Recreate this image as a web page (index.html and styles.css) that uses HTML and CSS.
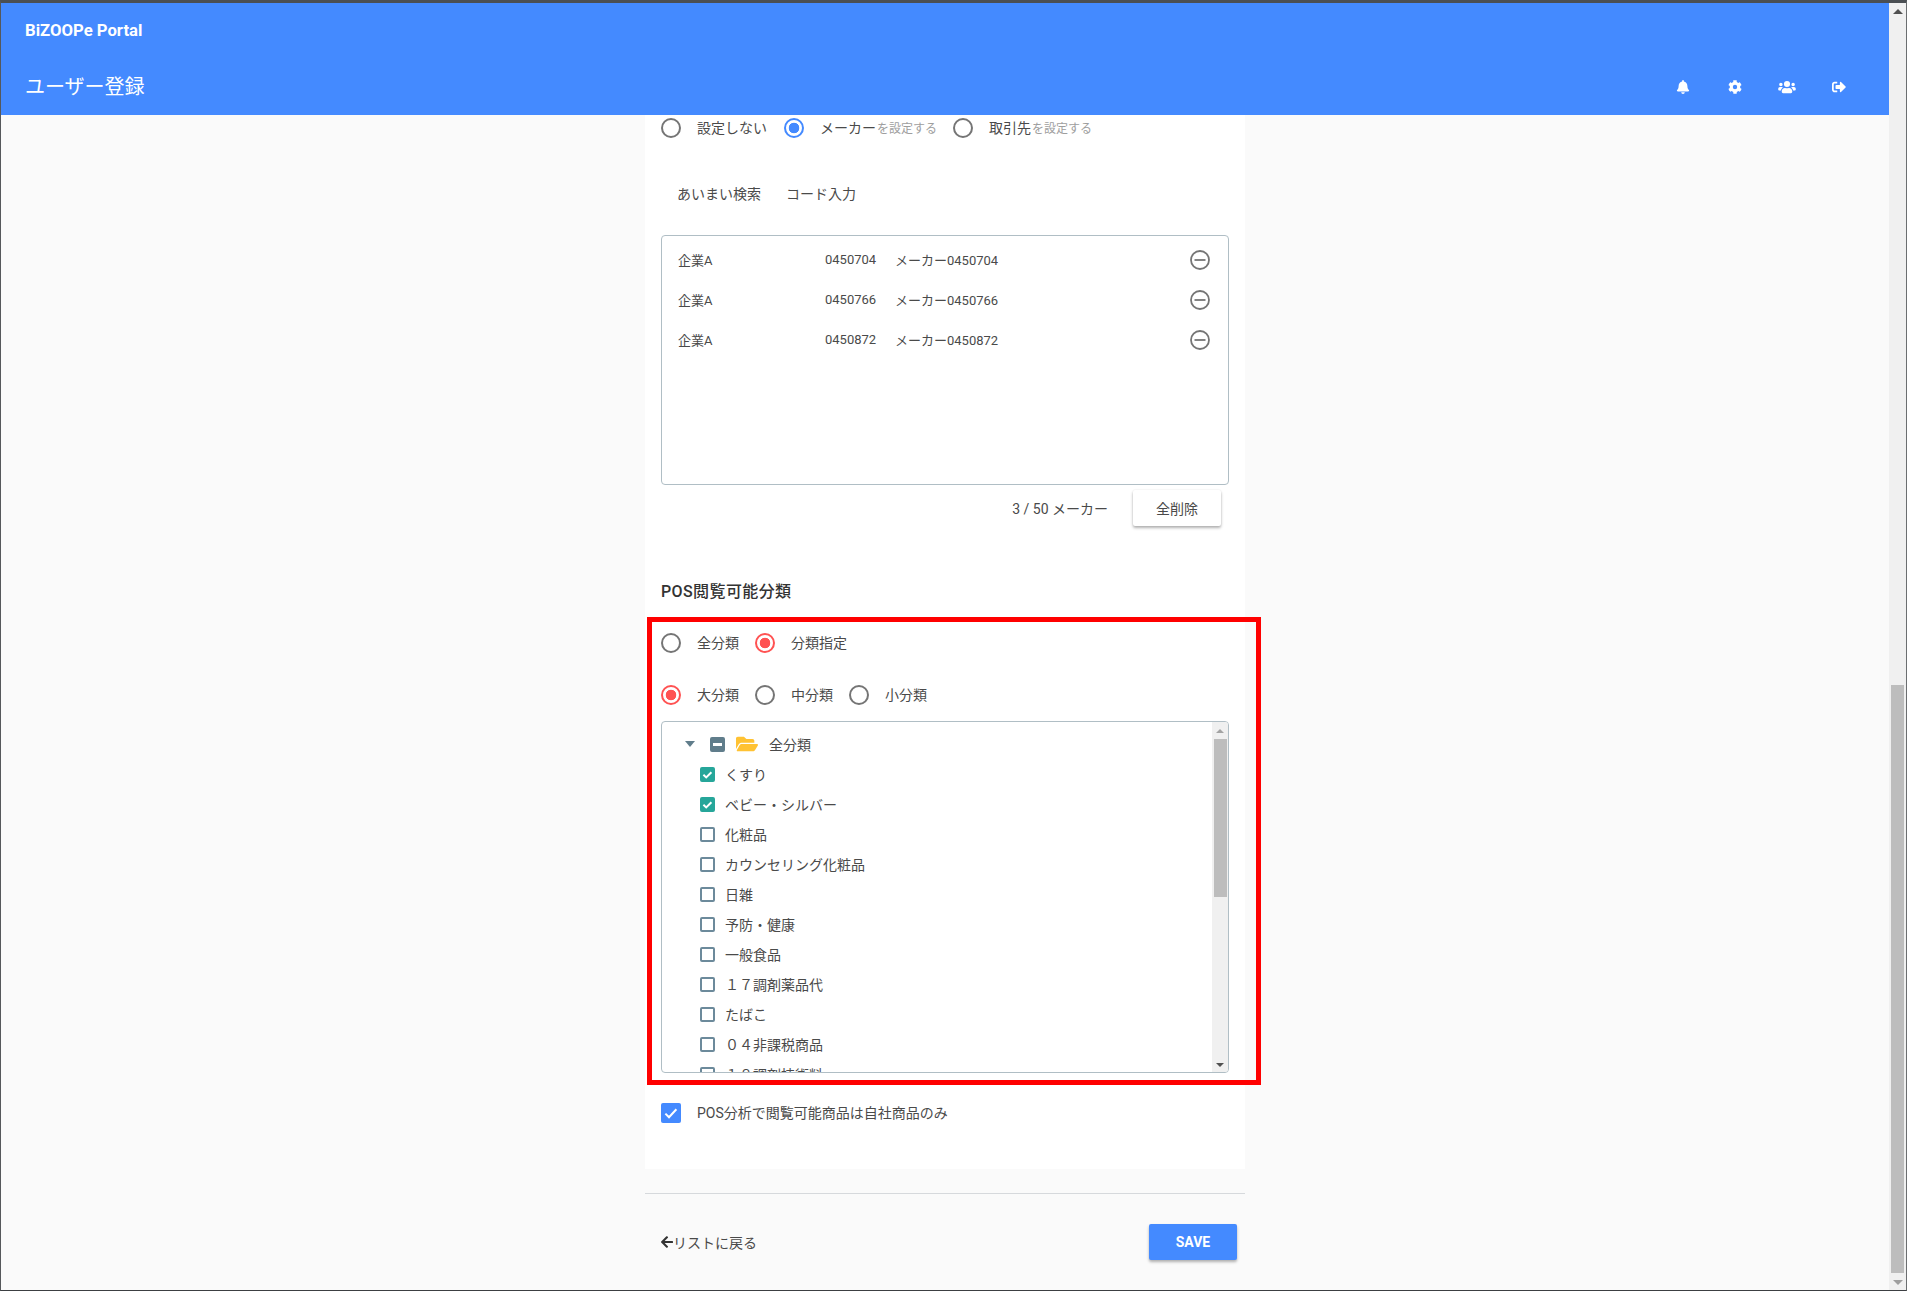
FILE: index.html
```html
<!DOCTYPE html>
<html lang="ja">
<head>
<meta charset="utf-8">
<title>ユーザー登録</title>
<link rel="stylesheet" href="styles.css">
</head>
<body>
<div class="window">
  <div class="page">
    <header class="appbar">
      <div class="brand">BiZOOPe Portal</div>
      <div class="titlebar">
        <h1 class="title">ユーザー登録</h1>
        <nav class="actions">
          <svg class="aicon" viewBox="0 0 448 512"><path d="M224 512c35 0 64-29 64-64H160c0 35 29 64 64 64zm215-150c-19-21-56-52-56-154 0-78-54-140-127-155V32a32 32 0 1 0-64 0v21C119 68 65 130 65 208c0 102-37 133-56 154-6 6-9 14-9 22 0 16 13 32 32 32h384c19 0 32-16 32-32 0-8-3-16-9-22z"/></svg>
          <svg class="aicon" viewBox="0 0 512 512"><path d="M487 316l-43-25a192 192 0 0 0 0-70l43-25c5-3 7-9 5-14-11-36-30-68-55-95-4-4-10-5-15-2l-43 25a190 190 0 0 0-60-35V25c0-6-4-11-9-12a201 201 0 0 0-108 0c-6 1-10 6-10 12v50c-22 8-42 20-60 35L90 85c-5-3-11-2-15 2-25 27-44 59-55 95-2 5 0 11 5 14l43 25a192 192 0 0 0 0 70l-43 25c-5 3-7 9-5 14 11 36 30 68 55 95 4 4 10 5 15 2l43-25c18 15 38 27 60 35v50c0 6 4 11 10 12 37 8 74 8 108 0 5-1 9-6 9-12v-50c22-8 42-20 60-35l43 25c5 3 11 2 15-2 25-27 44-59 55-95 2-5 0-11-5-14zM256 336a80 80 0 1 1 0-160 80 80 0 0 1 0 160z"/></svg>
          <svg class="aicon wide" viewBox="0 0 640 512"><path d="M96 224a64 64 0 1 0 0-128 64 64 0 0 0 0 128zm448 0a64 64 0 1 0 0-128 64 64 0 0 0 0 128zm32 32h-64c-18 0-34 7-45 19 40 22 69 62 75 109h66c18 0 32-14 32-32v-32c0-35-29-64-64-64zm-256 0a112 112 0 1 0 0-224 112 112 0 0 0 0 224zm77 32h-8a157 157 0 0 1-138 0h-8c-64 0-115 52-115 115v29c0 27 21 48 48 48h288c27 0 48-21 48-48v-29c0-63-51-115-115-115zm-224-13c-11-12-27-19-45-19H64c-35 0-64 29-64 64v32c0 18 14 32 32 32h66c6-47 35-87 75-109z"/></svg>
          <svg class="aicon" viewBox="0 0 512 512"><path d="M497 273L329 441c-15 15-41 4-41-17v-96H152c-13 0-24-11-24-24v-96c0-13 11-24 24-24h136V88c0-21 26-32 41-17l168 168c9 10 9 24 0 34zM192 436v-40c0-7-5-12-12-12H96c-18 0-32-14-32-32V160c0-18 14-32 32-32h84c7 0 12-5 12-12V76c0-7-5-12-12-12H96c-53 0-96 43-96 96v192c0 53 43 96 96 96h84c7 0 12-5 12-12z"/></svg>
        </nav>
      </div>
    </header>

    <main class="content">
      <section class="card">
        <div class="radio-row first">
          <label class="opt"><span class="radio"></span><span class="lbl">設定しない</span></label>
          <label class="opt"><span class="radio on-blue"></span><span class="lbl">メーカー<small class="hint">を設定する</small></span></label>
          <label class="opt"><span class="radio"></span><span class="lbl">取引先<small class="hint">を設定する</small></span></label>
        </div>

        <div class="tabs">
          <span class="tab">あいまい検索</span>
          <span class="tab">コード入力</span>
        </div>

        <div class="picked">
          <div class="pick"><span class="c-co">企業A</span><span class="c-no">0450704</span><span class="c-name">メーカー0450704</span><svg class="minus" viewBox="0 0 20 20"><circle cx="10" cy="10" r="9"/><path d="M4.5 10h11"/></svg></div>
          <div class="pick"><span class="c-co">企業A</span><span class="c-no">0450766</span><span class="c-name">メーカー0450766</span><svg class="minus" viewBox="0 0 20 20"><circle cx="10" cy="10" r="9"/><path d="M4.5 10h11"/></svg></div>
          <div class="pick"><span class="c-co">企業A</span><span class="c-no">0450872</span><span class="c-name">メーカー0450872</span><svg class="minus" viewBox="0 0 20 20"><circle cx="10" cy="10" r="9"/><path d="M4.5 10h11"/></svg></div>
        </div>

        <div class="count-row">
          <span class="count">3 / 50 メーカー</span>
          <button class="btn-clear">全削除</button>
        </div>

        <h2 class="section">POS閲覧可能分類</h2>

        <div class="radio-row mode">
          <label class="opt"><span class="radio"></span><span class="lbl">全分類</span></label>
          <label class="opt"><span class="radio on-red"></span><span class="lbl">分類指定</span></label>
        </div>
        <div class="radio-row level">
          <label class="opt"><span class="radio on-red"></span><span class="lbl">大分類</span></label>
          <label class="opt"><span class="radio"></span><span class="lbl">中分類</span></label>
          <label class="opt"><span class="radio"></span><span class="lbl">小分類</span></label>
        </div>

        <div class="treebox">
          <div class="tree">
            <div class="node root">
              <span class="caret"></span>
              <span class="tick partial"></span>
              <svg class="folder" viewBox="0 0 576 512"><path d="M572 292l-72 124c-12 19-33 32-56 32H44c-19 0-30-20-21-36l72-124c12-19 33-32 56-32h400c19 0 30 20 21 36zM152 224h328v-48c0-27-21-48-48-48H272l-64-64H48C21 64 0 85 0 112v278l69-119c17-29 49-47 83-47z"/></svg>
              <span class="ntext">全分類</span>
            </div>
            <div class="node"><span class="tick on"><svg viewBox="0 0 15 15"><path d="M3.4 7.8l2.8 2.6 5.2-5.2"/></svg></span><span class="ntext">くすり</span></div>
            <div class="node"><span class="tick on"><svg viewBox="0 0 15 15"><path d="M3.4 7.8l2.8 2.6 5.2-5.2"/></svg></span><span class="ntext">ベビー・シルバー</span></div>
            <div class="node"><span class="tick"></span><span class="ntext">化粧品</span></div>
            <div class="node"><span class="tick"></span><span class="ntext">カウンセリング化粧品</span></div>
            <div class="node"><span class="tick"></span><span class="ntext">日雑</span></div>
            <div class="node"><span class="tick"></span><span class="ntext">予防・健康</span></div>
            <div class="node"><span class="tick"></span><span class="ntext">一般食品</span></div>
            <div class="node"><span class="tick"></span><span class="ntext">１７調剤薬品代</span></div>
            <div class="node"><span class="tick"></span><span class="ntext">たばこ</span></div>
            <div class="node"><span class="tick"></span><span class="ntext">０４非課税商品</span></div>
            <div class="node"><span class="tick"></span><span class="ntext">１８調剤技術料</span></div>
          </div>
          <div class="minibar">
            <span class="arrow up small"></span>
            <span class="minithumb"></span>
            <span class="arrow down small"></span>
          </div>
        </div>

        <label class="own">
          <span class="bigcheck"><svg viewBox="0 0 20 20"><path d="M4.4 10.6l3.6 3.6 7.4-8"/></svg></span>
          <span class="lbl">POS分析で閲覧可能商品は自社商品のみ</span>
        </label>
      </section>

      <footer class="foot">
        <a class="back"><svg class="backarrow" viewBox="0 0 448 512"><path d="M257 446l-22 22c-10 9-25 9-34 0L7 273c-9-9-9-24 0-34L201 45c9-10 24-10 34 0l22 22c10 10 9 25 0 34L137 216h287c13 0 24 11 24 24v32c0 13-11 24-24 24H137l120 115c10 9 10 24 0 35z"/></svg>リストに戻る</a>
        <button class="btn-save">SAVE</button>
      </footer>

      <div class="callout"></div>
    </main>
  </div>

  <div class="pagebar">
    <span class="arrow up"></span>
    <span class="pagethumb"></span>
    <span class="arrow down"></span>
  </div>
</div>
</body>
</html>
```

FILE: styles.css
```css
* { box-sizing: border-box; }
html, body { margin: 0; height: 100%; overflow: hidden; }
body {
  font-family: Roboto, "Noto Sans CJK JP", sans-serif;
  font-size: 14px;
  color: #4a4a4a;
  background: #fafafa;
}
.window {
  height: 1291px;
  display: flex;
  border-top: 3px solid #4b4f53;
  border-left: 1px solid #55585b;
  border-right: 1px solid #6b6e70;
  border-bottom: 1px solid #3c3f42;
}
.page { flex: 1; min-width: 0; display: flex; flex-direction: column; }

/* header */
.appbar { height: 112px; background: #448aff; color: #fff; padding: 0 24px; flex: none; }
.brand { height: 56px; font-size: 16.7px; font-weight: 700; line-height: 56px; }
.titlebar { height: 56px; display: flex; align-items: center; justify-content: space-between; }
.title { margin: 0; font-size: 20px; font-weight: 400; line-height: 56px; }
.actions { display: flex; }
.aicon { width: 52px; height: 14px; fill: #fff; display: block; }

/* content */
.content { position: relative; flex: 1; }
.card { width: 600px; margin-left: 644px; background: #fff; height: 1054px; padding: 3px 16px 0; }
.radio-row { display: flex; align-items: center; height: 20px; }
.radio-row.mode { margin-top: 29px; }
.radio-row.level { margin-top: 32px; }
.opt { display: flex; align-items: center; margin-right: 16px; }
.radio { flex: none; width: 20px; height: 20px; border: 2px solid #757575; border-radius: 50%; margin-right: 16px; background: #fff; }
.radio.on-blue { border-color: #448aff; background: radial-gradient(circle, #448aff 0 5px, #fff 5.6px); }
.radio.on-red { border-color: #ff5252; background: radial-gradient(circle, #ff5252 0 5px, #fff 5.6px); }
.lbl { color: #4a4a4a; font-size: 14px; line-height: 20px; white-space: nowrap; }
.first .opt:nth-child(1) { margin-right: 17px; }
.first .opt:nth-child(2) { margin-right: 16px; }
.hint { font-size: 12px; color: #9e9e9e; margin-left: 1px; }

.tabs { display: flex; gap: 25px; height: 20px; margin-top: 45px; padding-left: 16px; align-items: center; }
.tab { color: #4a4a4a; font-size: 14px; }

.picked { height: 250px; margin-top: 32px; border: 1px solid #b0bec5; border-radius: 4px; padding: 4px 18px 0 16px; }
.pick { height: 40px; display: flex; align-items: center; font-size: 13px; color: #4a4a4a; }
.pick span { padding-bottom: 2px; }
.c-co { width: 147px; }
.c-no { width: 70px; }
.c-name { flex: 1; }
.minus { width: 20px; height: 20px; fill: none; stroke: #757575; stroke-width: 1.8; }

.count-row { display: flex; justify-content: flex-end; align-items: center; height: 36px; margin-top: 5px; padding-right: 8px; }
.count { font-size: 14px; color: #4a4a4a; margin-right: 25px; }
.btn-clear { width: 88px; height: 36px; border: 0; background: #fff; font: inherit; color: #4a4a4a; border-radius: 2px; box-shadow: 0 2px 3px rgba(0,0,0,.3), 0 0 2px rgba(0,0,0,.08); }

.section { margin: 54px 0 0; font-size: 16px; font-weight: 500; line-height: 24px; color: #333; letter-spacing: .4px; }

/* tree */
.treebox { height: 352px; margin-top: 16px; border: 1px solid #b0bec5; border-radius: 4px; display: flex; overflow: hidden; }
.tree { flex: 1; padding: 7px 0 0 38px; overflow: hidden; }
.node { display: flex; align-items: center; height: 30px; color: #4a4a4a; font-size: 14px; }
.node .tick { margin-right: 10px; }
.caret { width: 0; height: 0; border-left: 5px solid transparent; border-right: 5px solid transparent; border-top: 6px solid #607d8b; margin: 0 0 0 -15px; }
.root .tick { margin-left: 15px; }
.folder { width: 22px; height: 20px; fill: #ffc233; margin-left: 1px; margin-right: 11px; }
.tick { flex: none; display: block; width: 15px; height: 15px; border: 2px solid #6c8a9b; border-radius: 2px; background: #fff; position: relative; }
.tick.on { background: #26a69a; border-color: #26a69a; }
.tick.on svg { position: absolute; left: -2px; top: -2px; width: 15px; height: 15px; fill: none; stroke: #fff; stroke-width: 2; }
.tick.partial { background: #607d8b; border-color: #607d8b; }
.tick.partial::after { content: ""; position: absolute; left: 1px; right: 1px; top: 4px; height: 3px; background: #fff; }

.minibar { width: 16px; flex: none; background: #f0f0f0; display: flex; flex-direction: column; align-items: center; justify-content: space-between; padding: 7px 0 5px; position: relative; }
.minithumb { position: absolute; left: 2px; width: 13px; top: 17px; height: 158px; background: #bdbdbd; }

.arrow { display: block; width: 0; height: 0; border-left: 5px solid transparent; border-right: 5px solid transparent; }
.arrow.up { border-bottom: 5px solid #505050; }
.arrow.down { border-top: 5px solid #9e9e9e; }
.arrow.small { border-left-width: 4px; border-right-width: 4px; }
.arrow.small.up { border-bottom: 4px solid #a3a3a3; }
.arrow.small.down { border-top: 4px solid #505050; }

.own { display: flex; align-items: center; margin-top: 30px; }
.bigcheck { width: 20px; height: 20px; background: #448aff; border-radius: 2px; margin-right: 16px; flex: none; }
.bigcheck svg { display: block; fill: none; stroke: #fff; stroke-width: 2; }

/* footer */
.foot { width: 600px; margin-left: 644px; margin-top: 24px; border-top: 1px solid #d6d9dc; padding: 30px 8px 0 16px; display: flex; justify-content: space-between; align-items: center; }
.back { display: flex; align-items: center; color: #4a4a4a; font-size: 14px; }
.backarrow { width: 12px; height: 14px; fill: #333; }
.btn-save { width: 88px; height: 36px; border: 0; border-radius: 2px; background: #448aff; color: #fff; font: 700 14px Roboto, sans-serif; box-shadow: 0 2px 3px rgba(0,0,0,.3); }

/* red annotation over the form */
.callout { position: absolute; left: 646px; top: 502px; width: 614px; height: 468px; border: 5px solid #f00; pointer-events: none; }

/* page scrollbar */
.pagebar { width: 17px; flex: none; background: #f0f0f0; display: flex; flex-direction: column; align-items: center; justify-content: space-between; padding: 6px 0 5px; position: relative; }
.pagethumb { position: absolute; left: 2px; top: 682px; width: 13px; height: 588px; background: #bdbdbd; }
```
